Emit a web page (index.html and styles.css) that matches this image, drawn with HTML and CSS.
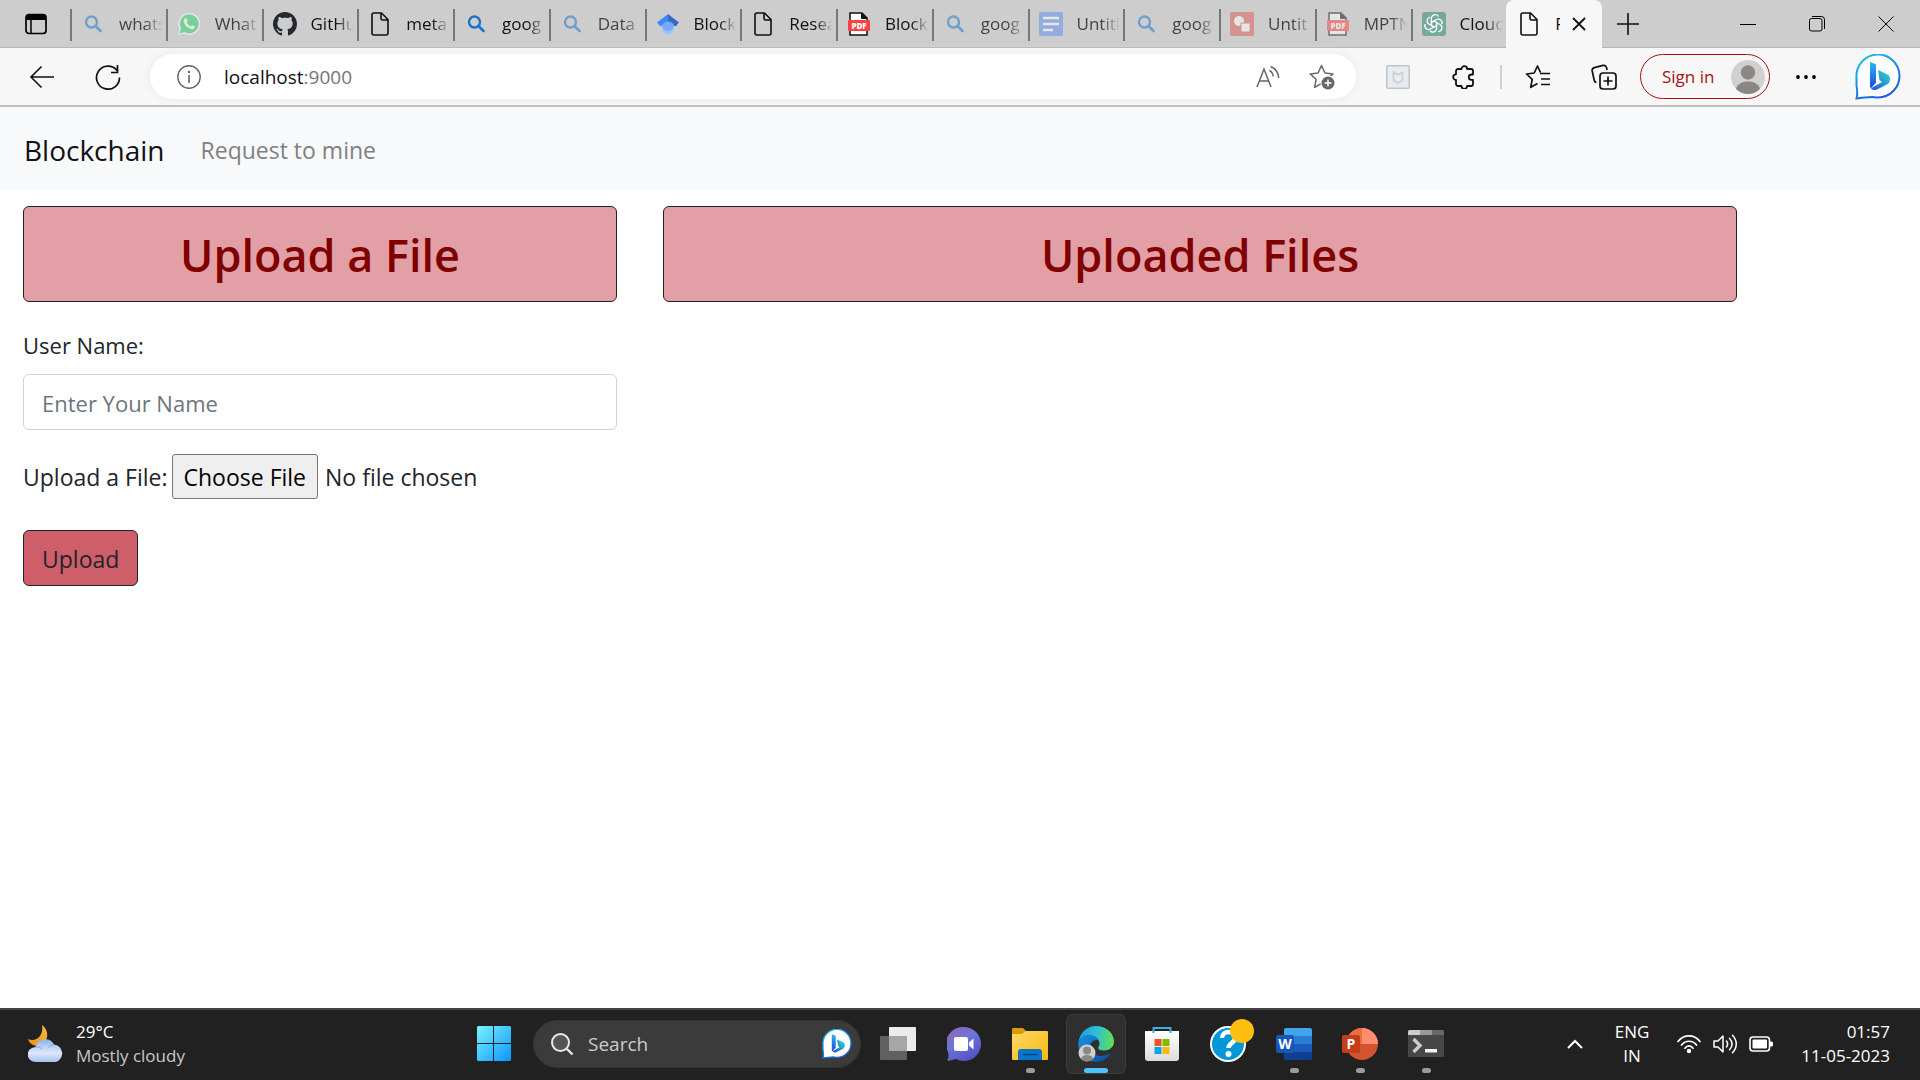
FILE: index.html
```html
<!DOCTYPE html>
<html lang="en">
<head>
<meta charset="utf-8">
<title>Blockchain</title>
<link rel="stylesheet" href="styles.css">
</head>
<body>
<svg class="defs" aria-hidden="true">
  <defs>
    <linearGradient id="g-bing" x1="0" y1="0" x2="0" y2="1"><stop offset="0" stop-color="#2fb4f5"/><stop offset="1" stop-color="#1b48d8"/></linearGradient>
    <linearGradient id="g-bing2" x1="0" y1="1" x2="1" y2="0"><stop offset="0" stop-color="#1f4fe0"/><stop offset="1" stop-color="#2fe0c8"/></linearGradient>
    <linearGradient id="g-ring" x1="0" y1="0" x2=".6" y2="1"><stop offset="0" stop-color="#19c8e8"/><stop offset="1" stop-color="#1a5be0"/></linearGradient>
    <linearGradient id="g-win" x1="0" y1="0" x2="1" y2="1"><stop offset="0" stop-color="#7af3ff"/><stop offset="1" stop-color="#0a95fb"/></linearGradient>
    <linearGradient id="g-cloud" x1="0" y1="0" x2="0" y2="1"><stop offset="0" stop-color="#8fb2ee"/><stop offset=".6" stop-color="#dce8fb"/><stop offset="1" stop-color="#a9c1f0"/></linearGradient>
    <linearGradient id="g-moon" x1="1" y1="0" x2="0" y2="1"><stop offset="0" stop-color="#f6bf3a"/><stop offset="1" stop-color="#f08a1c"/></linearGradient>
    <linearGradient id="g-chat" x1="0" y1="0" x2=".6" y2="1"><stop offset="0" stop-color="#9a65b5"/><stop offset=".5" stop-color="#6c74d8"/><stop offset="1" stop-color="#5553c8"/></linearGradient>
    <linearGradient id="g-folder" x1="0" y1="0" x2="1" y2="1"><stop offset="0" stop-color="#ffd968"/><stop offset="1" stop-color="#f7b80f"/></linearGradient>
    <linearGradient id="g-edge" x1="0" y1=".4" x2="1" y2=".5"><stop offset="0" stop-color="#1f9be8"/><stop offset=".5" stop-color="#2cc0d4"/><stop offset="1" stop-color="#64e04e"/></linearGradient>
    <linearGradient id="g-edge2" x1="0" y1="0" x2="1" y2="1"><stop offset="0" stop-color="#1592ea"/><stop offset="1" stop-color="#0b4a96"/></linearGradient>
    <linearGradient id="g-bag" x1="0" y1="0" x2="0" y2="1"><stop offset="0" stop-color="#fff"/><stop offset="1" stop-color="#dcdcdc"/></linearGradient>
    <symbol id="i-search" viewBox="0 0 24 24"><circle cx="10.500" cy="10" r="5.500" fill="none" stroke="currentColor" stroke-width="2.400"/><path d="M14.500 14l5 5" stroke="currentColor" stroke-width="2.600" stroke-linecap="round"/></symbol>
    <symbol id="i-page" viewBox="0 0 24 24"><path d="M6 1h7.500L20 7.500V21a2 2 0 0 1-2 2H6a2 2 0 0 1-2-2V3a2 2 0 0 1 2-2zM13 1v5.500a1.500 1.500 0 0 0 1.500 1.500H20" fill="none" stroke="#111" stroke-width="1.600" stroke-linejoin="round"/></symbol>
    <symbol id="i-pdf" viewBox="0 0 24 24"><path d="M3 1h12l5 5v17H3z" fill="#fff" stroke="#111" stroke-width="1.500"/><path d="M14.500 1v5.500H20z" fill="#111" stroke="#111"/><rect x="1" y="8" width="22" height="11" rx="1" fill="#ff4040"/><text x="12" y="16.500" text-anchor="middle" class="pdf-text">PDF</text></symbol>
    <symbol id="i-bing" viewBox="0 0 46 46"><path d="M1.500 44.500c1.500-5 .5-9 0-13V23A21.500 21.500 0 1 1 23 43.500c-2.500 0-4-.6-6-.6-4 0-9 1.100-15.500 1.600z" fill="#fff" stroke="url(#g-ring)" stroke-width="2"/><path d="M15 8l6 2.200v18.500l-5 5.600c-.8-.8-1-1.500-1-2.500z" fill="url(#g-bing)"/><path d="M23 16l9.500 4.500c4 2.500 3 8-.5 10L22 35.600c-2.500 1-5 .5-6-1.300L27 28l-2.500-2z" fill="url(#g-bing2)"/></symbol>
  </defs>
</svg>

<header class="browser">
  <div class="tabstrip">
    <button class="tab-actions" aria-label="Tab actions"><svg width="24" height="24" viewBox="0 0 24 24"><rect x="2" y="2.500" width="20" height="19" rx="3" fill="none" stroke="#000" stroke-width="1.700"/><path d="M2 8V5a3 3 0 0 1 3-3h14a3 3 0 0 1 3 3v3z"/><path d="M7 8v13" stroke="#000" stroke-width="1.500"/></svg></button>
    <nav class="tabs" aria-label="Tabs">
      <a class="tab asleep" href="#"><svg class="fav blue"><use href="#i-search"/></svg><span>whats</span></a>
      <a class="tab asleep" href="#"><svg class="fav" viewBox="0 0 24 24"><path d="M1 23l1.600-6A11 11 0 1 1 7 21.500z" fill="#fff"/><path d="M2.600 21.400l1.400-5A9.400 9.400 0 1 1 7.500 20z" fill="#25d366"/><path d="M8 6.500c.8-.8 1.600-.4 1.900.4l.7 1.700c.2.800-.9 1.300-.8 1.900.8 1.800 2 2.900 3.800 3.700.7 0 1.100-1.300 1.900-1l1.900.9c.7.400.4 1.800-.3 2.300-1.700 1.500-4.300.5-6.500-1.100-2.300-1.800-4.600-5.200-3.700-7.400.2-.6.600-1 1.100-1.400z" fill="#fff"/></svg><span>What</span></a>
      <a class="tab" href="#"><svg class="fav" viewBox="0 0 16 16"><path fill="#24292f" d="M8 0C3.580 0 0 3.580 0 8c0 3.540 2.290 6.530 5.470 7.590.4.070.55-.17.55-.38 0-.19-.01-.82-.01-1.490-2.010.37-2.530-.49-2.690-.94-.09-.23-.48-.94-.82-1.130-.28-.15-.68-.52-.01-.53.63-.01 1.080.58 1.230.82.72 1.210 1.870.87 2.330.66.07-.52.28-.87.51-1.070-1.780-.2-3.640-.89-3.640-3.950 0-.87.31-1.590.82-2.150-.08-.2-.36-1.020.08-2.120 0 0 .67-.21 2.200.82.64-.18 1.320-.27 2-.27s1.360.09 2 .27c1.530-1.040 2.200-.82 2.200-.82.44 1.100.16 1.920.08 2.120.51.56.82 1.270.82 2.150 0 3.070-1.870 3.750-3.650 3.950.29.25.54.73.54 1.480 0 1.070-.01 1.930-.01 2.200 0 .21.15.46.55.38A8.010 8.010 0 0 0 16 8c0-4.420-3.580-8-8-8z"/></svg><span>GitHu</span></a>
      <a class="tab" href="#"><svg class="fav"><use href="#i-page"/></svg><span>meta</span></a>
      <a class="tab" href="#"><svg class="fav blue"><use href="#i-search"/></svg><span>goog</span></a>
      <a class="tab asleep" href="#"><svg class="fav blue"><use href="#i-search"/></svg><span>Data</span></a>
      <a class="tab" href="#"><svg class="fav" viewBox="0 0 24 24"><circle cx="12" cy="16.500" r="6" fill="#a0c3ff"/><path d="M1 10.500L12 2v12H4z" fill="#4285f4"/><path d="M23 10.500L12 2v12h8z" fill="#356ac3"/><path d="M6 13a7 7 0 0 1 12 0 6 6 0 0 1-12 0z" fill="#76a7fa"/></svg><span>Block</span></a>
      <a class="tab" href="#"><svg class="fav"><use href="#i-page"/></svg><span>Resea</span></a>
      <a class="tab" href="#"><svg class="fav"><use href="#i-pdf"/></svg><span>Block</span></a>
      <a class="tab asleep" href="#"><svg class="fav blue"><use href="#i-search"/></svg><span>goog</span></a>
      <a class="tab asleep" href="#"><svg class="fav" viewBox="0 0 24 24"><rect width="24" height="24" rx="2" fill="#5a8def"/><path d="M4 6h16M4 12h16M4 18h10" stroke="#fff" stroke-width="2.600"/></svg><span>Untitl</span></a>
      <a class="tab asleep" href="#"><svg class="fav blue"><use href="#i-search"/></svg><span>goog</span></a>
      <a class="tab asleep" href="#"><svg class="fav" viewBox="0 0 24 24"><rect width="24" height="24" rx="2" fill="#db5b4f"/><circle cx="9" cy="9" r="5" fill="#fff"/><rect x="11" y="11" width="9" height="9" fill="#fff" stroke="#db5b4f"/></svg><span>Untit</span></a>
      <a class="tab asleep" href="#"><svg class="fav"><use href="#i-pdf"/></svg><span>MPTN</span></a>
      <a class="tab" href="#"><svg class="fav" viewBox="0 0 24 24"><rect width="24" height="24" rx="3" fill="#75a99b"/><g fill="none" stroke="#fff" stroke-width="1.300"><g id="petal"><path d="M9.400 10.500V6.500a3.800 3.800 0 0 1 7-2M9.400 10.500l5.200-3a3.800 3.800 0 0 1 5.300 4.600"/></g><use href="#petal" transform="rotate(120 12 12)"/><use href="#petal" transform="rotate(240 12 12)"/><path d="M12 9l2.600 1.500v3L12 15l-2.600-1.500v-3z"/></g></svg><span>Cloud</span></a>
      <a class="tab active" href="#" aria-current="page"><svg class="fav"><use href="#i-page"/></svg><span>F</span><svg class="close" width="14" height="14" viewBox="0 0 14 14"><path d="M1 1l12 12M13 1L1 13" stroke="#111" stroke-width="1.800"/></svg></a>
    </nav>
    <button class="new-tab" aria-label="New tab"><svg width="22" height="22" viewBox="0 0 22 22"><path d="M11 0v22M0 11h22" stroke="#111" stroke-width="1.600"/></svg></button>
    <div class="window-controls">
      <button aria-label="Minimize"><svg width="16" height="16" viewBox="0 0 16 16"><path d="M0 8.500h16" stroke="#000"/></svg></button>
      <button aria-label="Restore"><svg width="16" height="16" viewBox="0 0 16 16"><g fill="none" stroke="#000"><rect x=".5" y="2.500" width="12.500" height="12.500" rx="2"/><path d="M3 .5h9.500a3 3 0 0 1 3 3V13"/></g></svg></button>
      <button aria-label="Close"><svg width="16" height="16" viewBox="0 0 16 16"><path d="M.5.500l15 15M15.500.500l-15 15" stroke="#000"/></svg></button>
    </div>
  </div>

  <div class="toolbar">
    <button class="tool" aria-label="Back"><svg width="26" height="26" viewBox="0 0 26 26"><path d="M25 13H2M12.500 2.500L2 13l10.500 10.500" fill="none" stroke="#111" stroke-width="1.600"/></svg></button>
    <button class="tool" aria-label="Refresh"><svg width="26" height="26" viewBox="0 0 26 26"><path d="M24.500 13.500A11.500 11.500 0 1 1 22 6.500M22.500 1v7.500H16" fill="none" stroke="#111" stroke-width="1.700"/></svg></button>
    <div class="address">
      <svg width="24" height="24" viewBox="0 0 24 24"><circle cx="12" cy="12" r="11.200" fill="none" stroke="#666" stroke-width="1.400"/><path d="M12 10v8" stroke="#666" stroke-width="1.600"/><circle cx="12" cy="7" r="1.200" fill="#666"/></svg>
      <a class="url" href="#">localhost<span>:9000</span></a>
      <button aria-label="Read aloud"><svg width="24" height="24" viewBox="0 0 24 24"><g fill="none" stroke="#666" stroke-width="1.500"><path d="M1 22L8 4l7 18M3.500 16h9M13.500 5.500c2 1 3.500 3.500 3.700 6M14.500 1.500c5 2 8 6 8.200 11.500"/></g></svg></button>
      <button aria-label="Add to favorites"><svg width="26" height="26" viewBox="0 0 26 26"><path d="M12.500 1.500L16 9l8 .9-6 5.400 1.600 8-7-4-7 4 1.500-8-6-5.400L9 9z" fill="none" stroke="#666" stroke-width="1.500" stroke-linejoin="round"/><circle cx="19" cy="19" r="7.500" fill="#fff"/><circle cx="19" cy="19" r="6.500" fill="#666"/><path d="M19 15.500v7M15.500 19h7" stroke="#fff" stroke-width="1.500"/></svg></button>
    </div>
    <button class="tool" aria-label="McAfee"><svg width="24" height="24" viewBox="0 0 24 24"><rect x=".8" y=".8" width="22.400" height="22.400" rx="1" fill="#e9ecee" stroke="#bcc4c9" stroke-width="1.500"/><path d="M7.500 7.500l4.500 2.200 4.500-2.200v7.800L12 18l-4.500-2.700z" fill="none" stroke="#ccd2d6" stroke-width="2"/></svg></button>
    <button class="tool" aria-label="Extensions"><svg width="24" height="24" viewBox="0 0 24 24"><path d="M6 4h3.500a2.800 2.800 0 0 1 5.600 0H19a2 2 0 0 1 2 2v3.500h-1.500a2.700 2.700 0 0 0 0 5.400H21V19a2 2 0 0 1-2 2h-3.900a2.800 2.800 0 0 1-5.600 0H6a2 2 0 0 1-2-2v-4.100a2.800 2.800 0 0 1 0-5.600V6a2 2 0 0 1 2-2z" fill="none" stroke="#111" stroke-width="1.800" stroke-linejoin="round"/></svg></button>
    <span class="divider"></span>
    <button class="tool" aria-label="Favorites"><svg width="26" height="26" viewBox="0 0 26 26"><path d="M15.500 8.500L12.500 2 9.200 9 1.500 10l5.700 5.300-1.500 8 6.800-3.800M15 9.500h10M16 15h9M16 20.500h9" fill="none" stroke="#111" stroke-width="1.700" stroke-linejoin="round"/></svg></button>
    <button class="tool" aria-label="Collections"><svg width="26" height="26" viewBox="0 0 26 26"><g fill="none" stroke="#111" stroke-width="1.700"><rect x="9" y="9" width="16" height="16" rx="3"/><path d="M17 12.500v9M12.500 17h9M5.500 18.500c-1.200-.3-2-1-2.300-2.300L1.200 7c-.3-1.700.6-3 2.200-3.400L12 1.400c1.700-.4 3 .4 3.500 2l.6 2.600"/></g></svg></button>
    <button class="signin">Sign in <svg width="34" height="34" viewBox="0 0 34 34"><circle cx="17" cy="17" r="17" fill="#d2d0ce"/><circle cx="17" cy="12.500" r="7.200" fill="#8a8886"/><path d="M5 29c1-5 6-7.500 12-7.500S28 24 29 29a17 17 0 0 1-24 0z" fill="#8a8886"/></svg></button>
    <button class="tool" aria-label="Settings and more"><svg width="20" height="6" viewBox="0 0 20 6"><circle cx="2" cy="3" r="1.900"/><circle cx="10" cy="3" r="1.900"/><circle cx="18" cy="3" r="1.900"/></svg></button>
    <button class="tool bing" aria-label="Bing"><svg width="46" height="46"><use href="#i-bing"/></svg></button>
  </div>
</header>

<div class="page">
  <nav class="navbar">
    <a class="brand" href="#">Blockchain</a>
    <a class="nav-link" href="#">Request to mine</a>
  </nav>
  <main class="row">
    <section class="col">
      <h2 class="banner">Upload a File</h2>
      <form>
        <div class="field">
          <label for="user">User Name:</label>
          <input class="text-input" id="user" type="text" placeholder="Enter Your Name">
        </div>
        <div class="file-row">
          <label for="file">Upload a File:</label>
          <input id="file" type="file">
        </div>
        <button class="submit" type="submit">Upload</button>
      </form>
    </section>
    <section class="col">
      <h2 class="banner">Uploaded Files</h2>
    </section>
  </main>
</div>

<footer class="taskbar">
  <button class="weather">
    <svg width="36" height="38" viewBox="0 0 36 38"><path d="M14 0c7 5 7 15 0 20-5 2-12 1-14-6 4 2 9 1 12-3 2-3 3-7 2-11z" fill="url(#g-moon)"/><path d="M8 37a8 7.500 0 0 1-.5-15A10 10 0 0 1 26 19.500 9 9 0 0 1 28 37z" fill="url(#g-cloud)"/><path d="M7.500 22c3-.5 5 .5 6.500 2M26 19.500c-2 .2-4 1-5.500 3" fill="none" stroke="#86a6e4"/></svg>
    <span class="stack">29°C<small>Mostly cloudy</small></span>
  </button>
  <div class="dock">
    <button class="app" aria-label="Start"><svg width="36" height="36" viewBox="0 0 36 36"><path fill="url(#g-win)" d="M2 0h15v17H1V1zM18 0h16l1 1v16H18zM1 18h16v17H2l-1-1zM18 18h17v16l-1 1H18z"/></svg></button>
    <label class="search">
      <svg width="24" height="24" viewBox="0 0 24 24"><circle cx="10.500" cy="10.500" r="8.500" fill="#555" stroke="#e8e8e8" stroke-width="2"/><path d="M17 17l5.500 5.500" stroke="#e8e8e8" stroke-width="2.400"/></svg>
      <input type="search" placeholder="Search" aria-label="Search">
      <svg width="30" height="30"><use href="#i-bing"/></svg>
    </label>
    <button class="app" aria-label="Task view"><svg width="36" height="36" viewBox="0 0 36 36"><rect y="10" width="27" height="24" rx="1" fill="#606060"/><rect x="9" y="1" width="27" height="24" rx="1" fill="#ececec"/><path d="M9 10h18v15H9z" fill="#a6a6a6"/></svg></button>
    <button class="app" aria-label="Chat"><svg width="34" height="36" viewBox="0 0 34 36"><path d="M17 1a17 17 0 1 1-8 32c-3 1-6 2-9 1.500 1.500-2.500 2-5.500 1-8.500A17 17 0 0 1 17 1z" fill="url(#g-chat)"/><rect x="7" y="11" width="14" height="14" rx="2" fill="#fff"/><path d="M22 16.500l4.500-4v11l-4.500-4z" fill="#fff"/></svg></button>
    <button class="app running" aria-label="File Explorer"><svg width="36" height="36" viewBox="0 0 36 36"><path d="M0 3a1 1 0 0 1 1-1h10l4 4v6H0z" fill="#dc9a06"/><path d="M0 8h10l4-3h21a1 1 0 0 1 1 1v27a1 1 0 0 1-1 1H1a1 1 0 0 1-1-1z" fill="url(#g-folder)"/><path d="M6 34v-8a3 3 0 0 1 3-3h18a3 3 0 0 1 3 3v8z" fill="#0a74c8"/><path d="M11 28.500h14" stroke="#07457d" stroke-width="1.500"/></svg></button>
    <button class="app running current" aria-label="Microsoft Edge"><svg width="36" height="36" viewBox="0 0 36 36"><path d="M.5 17C1 7 9 0 18 0c10 0 18 7 18 15.500 0 6-5 9-10 9-4 0-6-1.500-6-2.500 0-.8 1.500-1.800 1.500-4.500 0-4-4-8-10-8C6 9.500 2 12 .5 17z" fill="url(#g-edge)"/><path d="M.3 17C2 12 6 9.500 11.500 9.500c5 0 8 2 9.500 5-5-1.500-9 1.500-9 6.500 0 8 9 12 21 6C29 33 24 36 18 36 8 36-.5 28 .3 17z" fill="url(#g-edge2)"/><circle cx="9" cy="27" r="8.500" fill="#d2d0ce"/><circle cx="9" cy="24.500" r="4" fill="#8a8886"/><path d="M3 33c.5-3 3-4 6-4s5.500 1 6 4a8.500 8.500 0 0 1-12 0z" fill="#8a8886"/></svg></button>
    <button class="app" aria-label="Microsoft Store"><svg width="36" height="36" viewBox="0 0 36 36"><path d="M1 5h34v27a3 3 0 0 1-3 3H4a3 3 0 0 1-3-3z" fill="url(#g-bag)"/><path d="M9.500 7V2h17v5" fill="none" stroke="#3aaee8" stroke-width="2"/><path d="M10.500 13h7v7h-7z" fill="#f25022"/><path d="M18.500 13h7v7h-7z" fill="#7fba00"/><path d="M10.500 21h7v7h-7z" fill="#00a4ef"/><path d="M18.500 21h7v7h-7z" fill="#ffb900"/></svg></button>
    <button class="app" aria-label="Get help"><svg width="52" height="52" viewBox="-7 0 52 52"><circle cx="19" cy="26" r="17" fill="#0497d8" stroke="#fff" stroke-width="2"/><path d="M13 20c0-8 13-8 13 0 0 5-6.500 5-6.500 10" fill="none" stroke="#fff" stroke-width="4.500"/><circle cx="19.500" cy="36" r="3" fill="#fff"/><circle cx="33" cy="13" r="12" fill="#ffbf0f"/></svg></button>
    <button class="app running" aria-label="Word"><svg width="36" height="36" viewBox="0 0 36 36"><path d="M8 4a2 2 0 0 1 2-2h24a2 2 0 0 1 2 2v6H8z" fill="#41a5ee"/><path d="M8 10h28v8H8z" fill="#2b7cd3"/><path d="M8 18h28v8H8z" fill="#185abd"/><path d="M8 26h28v6a2 2 0 0 1-2 2H10a2 2 0 0 1-2-2z" fill="#103f91"/><rect y="9" width="18" height="18" rx="2" fill="#1a55b8"/><text x="9" y="23" text-anchor="middle" class="app-letter">W</text></svg></button>
    <button class="app running" aria-label="PowerPoint"><svg width="36" height="36" viewBox="0 0 36 36"><circle cx="20" cy="18" r="16" fill="#d35230"/><path d="M20 2v16H4A16 16 0 0 1 20 2z" fill="#ed6c47"/><path d="M20 2a16 16 0 0 1 16 16H20z" fill="#ff8f6b"/><rect y="9" width="18" height="18" rx="2" fill="#c43e1c"/><text x="9" y="23" text-anchor="middle" class="app-letter">P</text></svg></button>
    <button class="app running" aria-label="Terminal"><svg width="36" height="36" viewBox="0 0 36 36"><rect y="4" width="36" height="27" rx="1.500" fill="#474747"/><path d="M0 9V5.500A1.500 1.500 0 0 1 1.500 4H12v5z" fill="#ccc"/><path d="M12 4h12v5H12z" fill="#999"/><path d="M24 4h10.500A1.500 1.500 0 0 1 36 5.500V9H24z" fill="#686868"/><path d="M5.500 13l6.500 6.500-6.500 6.500" fill="none" stroke="#ccc" stroke-width="3.400"/><path d="M17 23h12v3.500H17z" fill="#f2f2f2"/></svg></button>
  </div>
  <div class="tray">
    <button aria-label="Show hidden icons"><svg width="16" height="10" viewBox="0 0 16 10"><path d="M1 9l7-7 7 7" fill="none" stroke="#fff" stroke-width="2"/></svg></button>
    <button class="lang">ENG<br>IN</button>
    <button class="status" aria-label="Network, volume, battery">
      <svg width="24" height="20" viewBox="0 0 24 20"><g fill="none" stroke="#fff" stroke-width="1.700" stroke-linecap="round"><path d="M1 7.500c6-7.500 16-7.500 22 0M4.500 11c4-5 11-5 15 0M8 14.200c2-3 6-3 8 0"/></g><circle cx="12" cy="17" r="2.200" fill="#fff"/></svg>
      <svg width="24" height="20" viewBox="0 0 24 20"><g fill="none" stroke="#fff" stroke-width="1.500" stroke-linecap="round" stroke-linejoin="round"><path d="M1 7h4l5-5v16l-5-5H1zM13.500 7c1.500 2 1.500 4 0 6M16.500 4.200c3.200 3.600 3.200 8 0 11.600M19.500 1.200c5 5.300 5 12.300 0 17.600"/></g></svg>
      <svg width="24" height="20" viewBox="0 0 24 20"><rect x="1" y="3" width="19.500" height="14" rx="3" fill="none" stroke="#fff" stroke-width="1.600"/><rect x="3.500" y="5.500" width="14.500" height="9" rx="1" fill="#fff"/><path d="M21 7.500h1.500a1.500 1.500 0 0 1 1.500 1.500v2a1.500 1.500 0 0 1-1.500 1.500H21z" fill="#fff"/></svg>
    </button>
    <button class="clock">01:57<br>11-05-2023</button>
  </div>
</footer>
</body>
</html>
```
FILE: styles.css
```css
* { box-sizing: border-box; }
body {
  margin: 0;
  min-height: 100vh;
  display: flex;
  flex-direction: column;
  background: #fff;
  color: #212529;
  font-family: "Open Sans", "Noto Sans", sans-serif;
  font-size: 23px;
  line-height: 36px;
}
button, input { font: inherit; color: inherit; }
.browser button, .taskbar button { border: 0; background: none; padding: 0; }
a { color: inherit; text-decoration: none; }
svg { display: block; flex: none; }
.defs { position: absolute; width: 0; height: 0; }
.pdf-text { font-size: 8px; font-weight: 800; fill: #fff; }
.app-letter { font-size: 14px; font-weight: 700; fill: #fff; }

/* Tab strip */
.tabstrip {
  display: flex;
  height: 48px;
  background: #cdcdcd;
  box-shadow: inset 0 -1px #b8b8b8;
}
.browser .tab-actions { width: 70px; padding-left: 24px; }
.tabs {
  display: grid;
  grid-template-columns: repeat(16, minmax(0, 1fr));
  flex: 0 1 1532px;
  min-width: 0;
}
.tab {
  display: flex;
  align-items: center;
  gap: 14px;
  padding: 0 3px 0 9px;
  color: #111;
  font-size: 17px;
  line-height: 28px;
  border-left: 2px solid;
  border-image: linear-gradient(transparent 10px, #777 10px, #777 40px, transparent 40px) 1;
}
.tab span {
  flex: 1;
  min-width: 0;
  overflow: hidden;
  white-space: nowrap;
  mask-image: linear-gradient(to right, #000 calc(100% - 18px), transparent);
}
.fav { width: 24px; height: 24px; }
.blue { color: #1a73c8; }
.asleep .fav { opacity: .5; }
.asleep span { opacity: .75; }
.tab.active {
  padding: 0 16px 0 9px;
  background: #f7f7f7;
  border-image: none;
  border-color: #f7f7f7;
  border-radius: 8px 8px 0 0;
}
.tab.active span { overflow: clip; mask-image: none; }
.active .close { margin-left: -2px; }
.browser .new-tab { width: 52px; display: grid; place-items: center; }
.window-controls { display: flex; margin-left: auto; }
.window-controls button { width: 69px; display: grid; place-items: center; }

/* Toolbar */
.toolbar {
  display: flex;
  align-items: center;
  height: 59px;
  padding: 0 9px;
  background: #f7f7f7;
  border-bottom: 2px solid #bfbfbf;
}
.tool { width: 66px; height: 46px; display: grid; place-items: center; }
.bing { margin-left: 6px; }
.address {
  display: flex;
  align-items: center;
  flex: 1;
  gap: 23px;
  height: 45px;
  margin: 0 9px;
  padding: 0 21px 0 27px;
  border-radius: 23px;
  background: #fff;
  box-shadow: 0 0 8px #e8e8e8;
}
.address button { width: 26px; }
.address button:first-of-type { margin-right: 4px; }
.url { flex: 1; color: #111; font-size: 19px; }
.url span { color: #757575; }
.divider { width: 2px; height: 24px; margin: 0 3px; background: #d0d0d0; }
.browser .signin {
  display: flex;
  align-items: center;
  justify-content: space-between;
  width: 130px;
  height: 45px;
  margin: 0 3px;
  padding: 0 4px 0 21px;
  border: 1px solid #a80f14;
  border-radius: 23px;
  color: #a80f14;
  font-size: 17px;
}

/* Page */
.page { flex: 1; }
.navbar {
  display: flex;
  align-items: center;
  gap: 36px;
  padding: 21px 24px 18px;
  line-height: 45px;
  background: #f8f9fb;
}
.brand { color: #111; font-size: 28px; }
.nav-link { color: #808080; }
.row {
  display: grid;
  grid-template-columns: minmax(0, 4fr) minmax(0, 7fr) minmax(0, 1fr);
  padding-top: 15px;
}
.col { padding: 0 23px; }
.banner {
  margin: 0 0 25px;
  padding: 19px 18px 17px;
  border: 1px solid #212529;
  border-radius: 6px;
  background: #e29fa5;
  color: #800000;
  font-size: 45px;
  line-height: 58px;
  font-weight: 600;
  text-align: center;
}
.field label, .text-input { font-size: 22px; }
.field label { display: block; margin: 0 0 11px; }
.text-input {
  display: block;
  width: 100%;
  height: 56px;
  padding: 10px 18px 8px;
  border: 1px solid #ced4da;
  border-radius: 6px;
  background: #fff;
}
.text-input::placeholder { color: #6c757d; opacity: 1; }
.file-row { display: flex; align-items: center; gap: 4px; margin: 24px 0 31px; }
.file-row label { white-space: nowrap; }
.file-row input { flex: 1; min-width: 0; }
.file-row input::file-selector-button {
  height: 45px;
  padding: 0 11px;
  margin-right: 7px;
  border: 1px solid #767676;
  border-radius: 3px;
  background: #efefef;
  color: #000;
  font: inherit;
}
.submit {
  display: block;
  padding: 10px 18px 8px;
  border: 1px solid #212529;
  border-radius: 6px;
  background: #ce5e6a;
}

/* Taskbar */
.taskbar {
  display: grid;
  grid-template-columns: 1fr auto 1fr;
  align-items: center;
  height: 72px;
  padding-bottom: 2px;
  border-top: 2px solid #444;
  background: #212121;
  color: #fff;
  font-size: 17px;
  line-height: 24px;
}
.weather { display: flex; align-items: center; gap: 12px; margin-left: 28px; text-align: left; }
.stack { display: flex; flex-direction: column; }
.stack small { font-size: 17px; color: #c8c8c8; }
.dock { display: flex; align-items: center; }
.app {
  position: relative;
  display: grid;
  place-items: center;
  width: 60px;
  height: 60px;
  margin: 0 3px;
}
.running::after {
  content: "";
  position: absolute;
  bottom: 1px;
  left: 50%;
  width: 9px;
  height: 5px;
  margin-left: -4px;
  border-radius: 3px;
  background: #9a9a9a;
}
.taskbar .current { background: #2f2f2f; border: 1px solid #3c3c3c; border-radius: 6px; }
.current::after { width: 24px; margin-left: -12px; bottom: 0; background: #4cc2ff; }
.search {
  display: flex;
  align-items: center;
  gap: 14px;
  width: 328px;
  height: 48px;
  margin: 0 4px 0 6px;
  padding: 0 8px 0 16px;
  border: 1px solid #333;
  border-radius: 24px;
  background: #3b3b3b;
}
.search input {
  flex: 1;
  min-width: 0;
  padding: 0;
  border: 0;
  background: none;
  font-size: 19px;
}
.search input::placeholder { color: #ccc; opacity: 1; }
.tray { display: flex; align-items: center; justify-content: flex-end; padding-right: 30px; }
.lang { margin-left: 32px; text-align: center; }
.status { display: flex; gap: 12px; margin: 0 28px; }
.taskbar .clock { text-align: right; }
```
